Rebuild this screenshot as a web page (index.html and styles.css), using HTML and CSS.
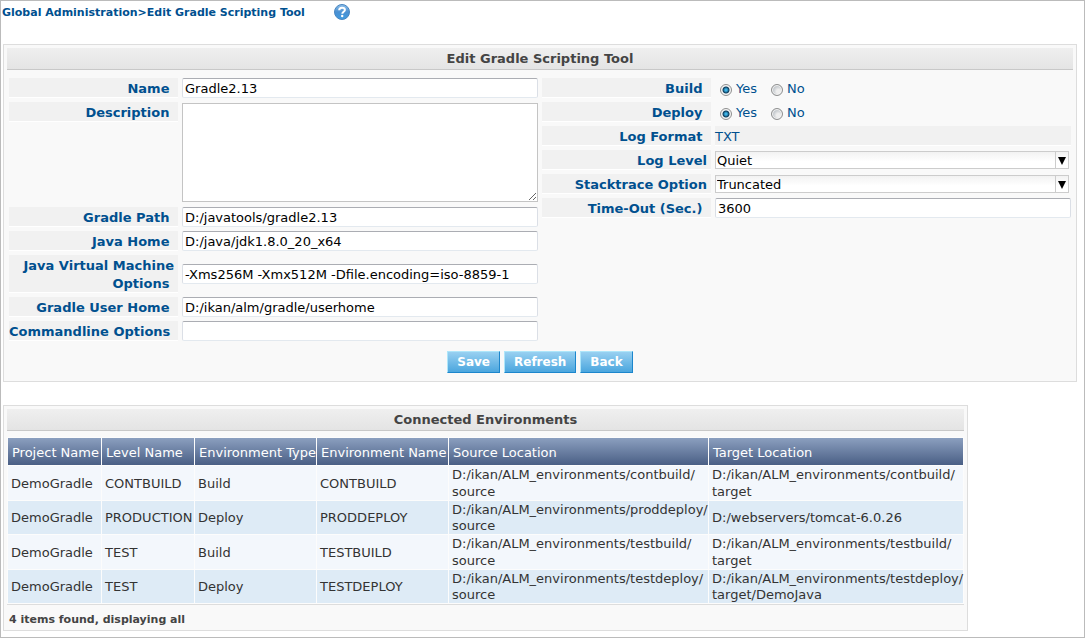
FILE: index.html
```html
<!DOCTYPE html>
<html lang="en">
<head>
<meta charset="utf-8">
<title>Edit Gradle Scripting Tool</title>
<link rel="stylesheet" href="styles.css">
</head>
<body>
<div class="page">
  <header class="crumbs">
    <span>Global Administration&gt;Edit Gradle Scripting Tool</span>
    <a class="help" href="#" aria-label="Help">
      <svg width="16" height="16" viewBox="0 0 16 16" aria-hidden="true">
        <defs>
          <linearGradient id="ball" x1="0" y1="0" x2="0" y2="1">
            <stop offset="0" stop-color="#8fc0ea"/>
            <stop offset="0.5" stop-color="#4a90d2"/>
            <stop offset="1" stop-color="#3f9be0"/>
          </linearGradient>
        </defs>
        <circle cx="8" cy="8" r="7.5" fill="url(#ball)" stroke="#4a86c0"/>
        <path d="M5.200 6.200C5.200 4.400 6.400 3.700 8 3.700s2.900 .8 2.900 2.300c0 1.700-2.600 1.800-2.600 3.700" fill="none" stroke="#fff" stroke-width="2"/>
        <circle cx="8.200" cy="12" r="1.200" fill="#fff"/>
      </svg>
    </a>
  </header>

  <form class="panel">
    <h1 class="title">Edit Gradle Scripting Tool</h1>
    <div class="columns">
      <div class="fields">
        <label class="label" for="name">Name&nbsp;</label>
        <input class="text" id="name" type="text" value="Gradle2.13">
        <label class="label" for="desc">Description&nbsp;</label>
        <textarea class="text area" id="desc"></textarea>
        <label class="label" for="path">Gradle Path&nbsp;</label>
        <input class="text" id="path" type="text" value="D:/javatools/gradle2.13">
        <label class="label" for="java">Java Home&nbsp;</label>
        <input class="text" id="java" type="text" value="D:/java/jdk1.8.0_20_x64">
        <label class="label" for="jvm">Java Virtual Machine<br>Options&nbsp;</label>
        <input class="text" id="jvm" type="text" value="-Xms256M -Xmx512M -Dfile.encoding=iso-8859-1">
        <label class="label" for="home">Gradle User Home&nbsp;</label>
        <input class="text" id="home" type="text" value="D:/ikan/alm/gradle/userhome">
        <label class="label" for="cmd">Commandline Options&nbsp;</label>
        <input class="text" id="cmd" type="text" value="">
      </div>
      <div class="fields">
        <span class="label" id="build">Build&nbsp;</span>
        <div class="radios" role="radiogroup" aria-labelledby="build">
          <label class="choice"><input class="radio" type="radio" name="build" checked>Yes</label>
          <label class="choice"><input class="radio" type="radio" name="build">No</label>
        </div>
        <span class="label" id="deploy">Deploy&nbsp;</span>
        <div class="radios" role="radiogroup" aria-labelledby="deploy">
          <label class="choice"><input class="radio" type="radio" name="deploy" checked>Yes</label>
          <label class="choice"><input class="radio" type="radio" name="deploy">No</label>
        </div>
        <span class="label">Log Format&nbsp;</span>
        <span class="value">TXT</span>
        <label class="label" for="level">Log Level</label>
        <div class="drop"><select class="select" id="level"><option>Quiet</option></select></div>
        <label class="label" for="stack">Stacktrace Option</label>
        <div class="drop"><select class="select" id="stack"><option>Truncated</option></select></div>
        <label class="label" for="timeout">Time-Out (Sec.)&nbsp;</label>
        <input class="text" id="timeout" type="text" value="3600">
      </div>
    </div>
    <div class="actions">
      <button class="button" type="button">Save</button>
      <button class="button" type="button">Refresh</button>
      <button class="button" type="button">Back</button>
    </div>
  </form>

  <section class="panel connected">
    <h2 class="title">Connected Environments</h2>
    <table class="grid">
      <colgroup><col class="c-project"><col class="c-level"><col class="c-type"><col class="c-name"><col class="c-source"><col></colgroup>
      <thead>
        <tr><th>Project Name</th><th>Level Name</th><th>Environment Type</th><th>Environment Name</th><th>Source Location</th><th>Target Location</th></tr>
      </thead>
      <tbody>
        <tr><td>DemoGradle</td><td>CONTBUILD</td><td>Build</td><td>CONTBUILD</td><td>D:/ikan/ALM_environments/contbuild/<br>source</td><td>D:/ikan/ALM_environments/contbuild/<br>target</td></tr>
        <tr><td>DemoGradle</td><td>PRODUCTION</td><td>Deploy</td><td>PRODDEPLOY</td><td>D:/ikan/ALM_environments/proddeploy/<br>source</td><td>D:/webservers/tomcat-6.0.26</td></tr>
        <tr><td>DemoGradle</td><td>TEST</td><td>Build</td><td>TESTBUILD</td><td>D:/ikan/ALM_environments/testbuild/<br>source</td><td>D:/ikan/ALM_environments/testbuild/<br>target</td></tr>
        <tr><td>DemoGradle</td><td>TEST</td><td>Deploy</td><td>TESTDEPLOY</td><td>D:/ikan/ALM_environments/testdeploy/<br>source</td><td>D:/ikan/ALM_environments/testdeploy/<br>target/DemoJava</td></tr>
      </tbody>
    </table>
    <p class="count">4 items found, displaying all</p>
  </section>
</div>
</body>
</html>
```
FILE: styles.css
```css
* { box-sizing: border-box; }

body {
  margin: 0;
  background: #fff;
  color: #333;
  font-family: Verdana, "DejaVu Sans", sans-serif;
  font-size: 13px;
}

.page {
  min-height: 100vh;
  padding: 0 7px 6px 2px;
  border: 1px solid #bbb;
}

.crumbs {
  display: flex;
  align-items: center;
  gap: 29px;
  height: 22px;
  margin: 0 0 21px -1px;
  color: #00508f;
  font-size: 11px;
  font-weight: bold;
}

.help { display: flex; }

.panel {
  padding: 3px;
  border: 1px solid #ddd;
  background: #f9f9f9;
}

.title {
  height: 22px;
  margin: 0;
  border-bottom: 1px solid #c8c8c8;
  background: linear-gradient(#efefef, #e4e4e4);
  color: #444;
  font-size: 13px;
  line-height: 21px;
  text-align: center;
}

.columns {
  display: grid;
  grid-template-columns: 1fr 1fr;
  align-items: start;
  gap: 4px;
  padding: 8px 2px 0;
}

.fields {
  display: grid;
  grid-template-columns: 169px 1fr;
  align-items: center;
  gap: 4px;
}

.label {
  align-self: start;
  padding: 2px 4px 0 0;
  background: #f1f1f1;
  box-shadow: inset 0 -1px #fff;
  color: #00508f;
  font-weight: bold;
  line-height: 18px;
  text-align: right;
  white-space: nowrap;
}

.text {
  width: 100%;
  height: 20px;
  padding: 0 2px;
  border: 1px solid;
  border-color: #abadb3 #dbdfe6 #e3e9ef #dbdfe6;
  border-radius: 2px;
  background: #fff;
  color: #000;
  font: inherit;
}

.area {
  height: 99px;
  margin: 1px 0;
  border-color: #c4c4c4;
  border-radius: 0;
  resize: both;
}

.radios {
  display: flex;
  gap: 14px;
  height: 20px;
  padding-left: 5px;
  color: #00508f;
}

.choice {
  display: flex;
  gap: 4px;
  line-height: 22px;
}

.radio {
  appearance: none;
  width: 12px;
  height: 12px;
  margin: 6px 0 0;
  border: 1px solid #8e8f8f;
  border-radius: 50%;
  background: radial-gradient(circle at 65% 65%, #eee 0 2px, #c9cdd1 5px);
  box-shadow: inset 0 0 0 1px #f4f4f4;
}

.radio:checked {
  background: radial-gradient(circle, #3fb4e6 0 1px, #0b3b5c 3px, #f4f4f4 4px);
}

.value {
  padding-top: 2px;
  background: #f1f1f1;
  box-shadow: inset 0 -1px #fff;
  color: #00508f;
  line-height: 18px;
}

.drop {
  position: relative;
  margin-right: 2px;
}

.drop::after {
  content: "";
  position: absolute;
  top: 6px;
  right: 3px;
  width: 8px;
  height: 8px;
  background: #000;
  clip-path: polygon(0 0, 100% 0, 50% 100%);
  pointer-events: none;
}

.select {
  display: block;
  appearance: none;
  width: 100%;
  height: 18px;
  padding: 0 16px 0 1px;
  border: 1px solid #ccc;
  border-radius: 0;
  background:
    linear-gradient(#ccc, #ccc) right 12px top / 1px 100% no-repeat,
    linear-gradient(#f2f2f2, #fff 60%);
  color: #000;
  font: inherit;
}

.actions {
  display: flex;
  justify-content: center;
  gap: 4px;
  padding: 10px 0 5px;
}

.button {
  height: 22px;
  padding: 0 9px;
  border: 1px solid;
  border-color: #aee6fa #1c86cc #1c86cc #aee6fa;
  background: linear-gradient(#98d0f1, #4ba6de);
  color: #fff;
  font: bold 12px Verdana, "DejaVu Sans", sans-serif;
}

.connected {
  max-width: 965px;
  margin-top: 23px;
}

.grid {
  width: 100%;
  margin-top: 6px;
  border-bottom: 1px solid #ddd;
  border-spacing: 1px;
  background: #fcfcfc;
  table-layout: fixed;
}

.c-project { width: 93px; }
.c-level { width: 92px; }
.c-type { width: 121px; }
.c-name { width: 131px; }
.c-source { width: 259px; }

.grid th {
  height: 27px;
  padding: 2px 0 0 4px;
  background: linear-gradient(#8b9fbf, #4a5f85);
  color: #fff;
  font-weight: normal;
  text-align: left;
  white-space: nowrap;
}

.grid td {
  height: 34px;
  padding: 0 0 0 3px;
  background: #f3f7fc;
  line-height: 17px;
  white-space: nowrap;
}

.grid tr:nth-child(even) td {
  height: 33px;
  background: #deebf6;
  line-height: 16px;
}

.count {
  margin: 0;
  padding: 7px 2px 0;
  font-size: 11px;
  font-weight: bold;
  line-height: 15px;
  color: #444;
}
```
